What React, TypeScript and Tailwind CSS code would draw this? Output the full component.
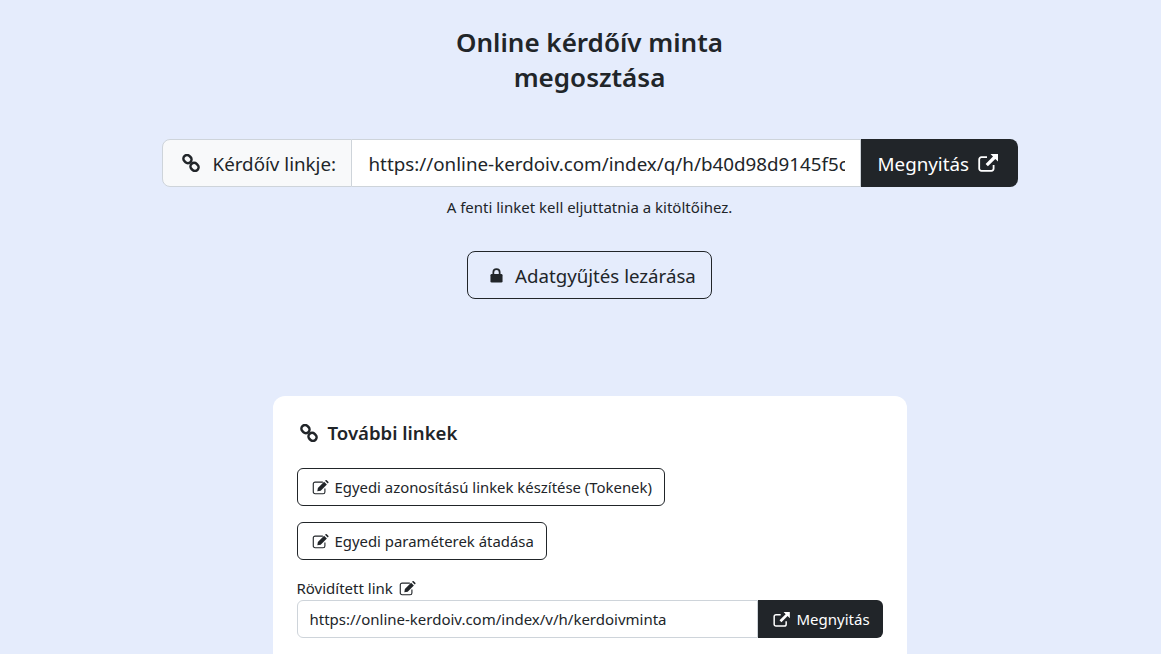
function LinkIcon({ className }: { className?: string }) {
  return (
    <svg viewBox="0 0 20 20" className={className} fill="none" stroke="currentColor" strokeWidth="2.8">
      <rect x="1.4" y="1.6" width="9.4" height="8" rx="4" transform="rotate(45 6 5.6)" />
      <rect x="9.2" y="10.4" width="9.4" height="8" rx="4" transform="rotate(45 14 14.4)" />
    </svg>
  );
}

function EditIcon({ className }: { className?: string }) {
  return (
    <svg viewBox="0 0 18 16" className={className}>
      <path d="M11.5 2.2H3.2A1.9 1.9 0 0 0 1.3 4.1v8.6a1.9 1.9 0 0 0 1.9 1.9h8.6a1.9 1.9 0 0 0 1.9-1.9V9" fill="none" stroke="currentColor" strokeWidth="1.2" />
      <path d="M6.2 8.4 12.8 1.8l3 3-6.6 6.6-3.6.7zM13.8.8l.6-.5a1 1 0 0 1 1.3 0l1.6 1.6a1 1 0 0 1 0 1.3l-.6.6z" fill="currentColor" />
    </svg>
  );
}

function ExternalIcon({ className }: { className?: string }) {
  return (
    <svg viewBox="0 0 20 18" className={className}>
      <path d="M9 3.2H3.4A2.2 2.2 0 0 0 1.2 5.4v9.2a2.2 2.2 0 0 0 2.2 2.2h10a2.2 2.2 0 0 0 2.2-2.2V11" fill="none" stroke="currentColor" strokeWidth="1.8" />
      <path d="M12.5 0H20v7.5l-2.7-2.6-7.4 7.4-2.3-2.3 7.4-7.4z" fill="currentColor" />
    </svg>
  );
}

function LockIcon({ className }: { className?: string }) {
  return (
    <svg viewBox="0 0 14 16" className={className}>
      <path d="M3.6 8V5a3.4 3.4 0 0 1 6.8 0v3" fill="none" stroke="currentColor" strokeWidth="1.9" />
      <rect x="0.5" y="7" width="13" height="9" rx="1.4" fill="currentColor" />
    </svg>
  );
}

export default function App() {
  return (
    <div className="h-[654px] overflow-hidden bg-[#e5ecfc] text-[#212529] font-['Noto_Sans','Open_Sans',sans-serif]">
      <div className="flex flex-col items-center pl-[18px] pt-6">
        <h1 className="w-[300px] pt-px pb-0 text-center text-[26px] font-semibold leading-[35px]">
          Online kérdőív minta<br />megosztása
        </h1>
        <div className="mt-[44px] flex h-12 w-[856px] text-[18.8px]">
          <div className="flex w-[190px] shrink-0 items-center gap-[13px] rounded-l-lg border border-[#ced4da] bg-[#f8f9fa] pl-[19px] pt-[2px] whitespace-nowrap">
            <LinkIcon className="-mt-[2px] h-[18px] w-[18px]" />
            <span>Kérdőív linkje:</span>
          </div>
          <div className="flex min-w-0 flex-1 items-center border-y border-r border-[#ced4da] bg-white pl-[17px] pr-[15px] pt-[2px]">
            <div className="min-w-0 overflow-hidden whitespace-nowrap">https://online-kerdoiv.com/index/q/h/b40d98d9145f5c0e1a</div>
          </div>
          <button className="flex w-[157px] shrink-0 items-center gap-[9px] rounded-r-lg bg-[#212529] pl-[17px] text-white whitespace-nowrap">
            <span className="pt-[2px]">Megnyitás</span>
            <ExternalIcon className="h-[18px] w-5" />
          </button>
        </div>
        <p className="mt-[10px] text-[15px] leading-[21px]">A fenti linket kell eljuttatnia a kitöltőihez.</p>
        <button className="mt-[33px] flex h-12 w-[245px] items-center gap-[12px] rounded-lg border border-[#212529] pl-[22px] text-[18.7px]">
          <LockIcon className="h-4 w-[13px]" /> <span className="pt-[2px]">Adatgyűjtés lezárása</span>
        </button>
        <div className="mt-[97px] h-[400px] w-[634px] shrink-0 rounded-xl bg-white px-6 pt-6">
          <div className="flex h-[26px] items-center gap-[10px] pl-[3px] text-[18.6px] font-semibold">
            <LinkIcon className="h-[18px] w-[18px]" /> További linkek
          </div>
          <div className="mt-[22px] flex flex-col items-start gap-4 text-[14.9px]">
            <button className="flex h-[38px] items-center gap-[6px] rounded-md border border-[#212529] pl-[14px] pr-[12px]">
              <EditIcon className="h-[15px] w-[17px]" /> Egyedi azonosítású linkek készítése (Tokenek)
            </button>
            <button className="flex h-[38px] items-center gap-[6px] rounded-md border border-[#212529] pl-[14px] pr-[12px]">
              <EditIcon className="h-[15px] w-[17px]" /> Egyedi paraméterek átadása
            </button>
          </div>
          <div className="mt-[18px] flex h-[21px] items-center gap-[6px] text-[15px]">
            Rövidített link <EditIcon className="h-[15px] w-[17px]" />
          </div>
          <div className="mt-[1px] flex h-[38px] w-[586px] text-[15px]">
            <div className="flex min-w-0 flex-1 items-center rounded-l-md border border-[#ced4da] bg-white px-3 whitespace-nowrap">
              https://online-kerdoiv.com/index/v/h/kerdoivminta
            </div>
            <button className="flex w-[125px] shrink-0 items-center gap-[7px] rounded-r-md bg-[#212529] pl-[15px] text-white whitespace-nowrap">
              <ExternalIcon className="h-[15px] w-[17px]" /> Megnyitás
            </button>
          </div>
        </div>
      </div>
    </div>
  );
}
